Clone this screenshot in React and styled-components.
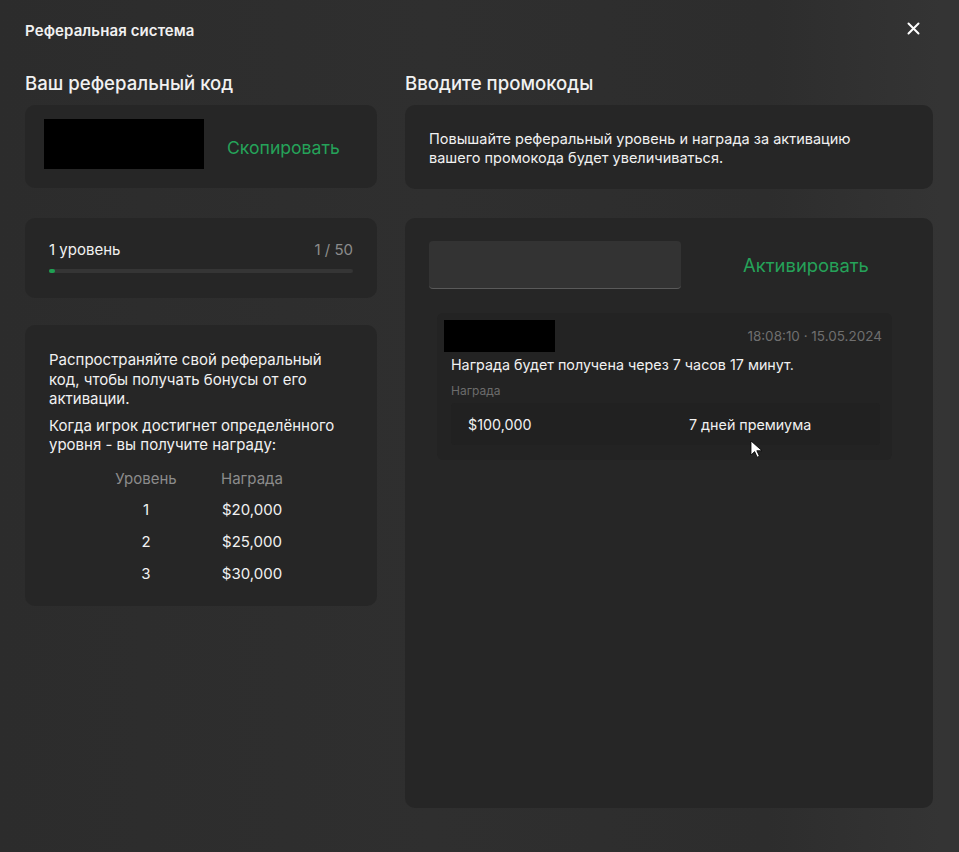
import React from 'react';
import styled, { createGlobalStyle } from 'styled-components';

const GlobalStyle = createGlobalStyle`
  html, body {
    margin: 0;
    padding: 0;
    background: #2e2e2e;
  }
  * {
    box-sizing: border-box;
  }
`;

const colors = {
  card: '#262626',
  text: '#f1f1f1',
  muted: '#8c8c8c',
  dim: '#6c6c6c',
  green: '#25a259',
};

const Modal = styled.div`
  width: 959px;
  height: 852px;
  padding: 0 26px 0 25px;
  font-family: Inter, "Noto Sans", sans-serif;
  color: ${colors.text};
  background: linear-gradient(90deg, #2c2c2c 0%, #2f2f2f 45%, #2d2d2d 80%, #343434 98%);
`;

const Header = styled.div`
  height: 60px;
  display: flex;
  align-items: center;
  justify-content: space-between;
`;

const ModalTitle = styled.h1`
  margin: 0;
  font-size: 15px;
  font-weight: 600;
  letter-spacing: 0.1px;
`;

const CloseButton = styled.button`
  width: 24px;
  height: 24px;
  margin-right: 8px;
  margin-top: -4px;
  padding: 0;
  border: none;
  background: none;
  color: #fff;
  display: flex;
  align-items: center;
  justify-content: center;
  cursor: pointer;
`;

const Columns = styled.div`
  display: grid;
  grid-template-columns: 352px 528px;
  column-gap: 28px;
  margin-top: 11px;
  align-items: start;
`;

const Column = styled.div`
  display: flex;
  flex-direction: column;
`;

const SectionTitle = styled.h2`
  margin: 0 0 10px;
  font-size: 18.6px;
  line-height: 24px;
  font-weight: 500;
`;

const Card = styled.div`
  background: ${colors.card};
  border-radius: 10px;
  padding: ${p => p.$pad || '24px'};
  margin-bottom: ${p => p.$gap || '0'};
  height: ${p => p.$height || 'auto'};
`;

const CodeRow = styled.div`
  display: flex;
  align-items: center;
  gap: 23px;
`;

const Redacted = styled.div`
  background: #000;
  width: ${p => p.$w}px;
  height: ${p => p.$h}px;
  margin-left: ${p => p.$shift || 0}px;
`;

const GreenAction = styled.button`
  background: none;
  border: none;
  padding: 0;
  font-family: inherit;
  font-size: ${p => p.$size || '17.6px'};
  color: ${colors.green};
  cursor: pointer;
`;

const CopyButton = styled(GreenAction)`
  margin-top: 6px;
`;

const LevelTop = styled.div`
  display: flex;
  justify-content: space-between;
  font-size: 15px;
  line-height: 20px;
  margin-bottom: 9px;
`;

const Muted = styled.span`
  color: ${colors.muted};
`;

const Track = styled.div`
  height: 4px;
  border-radius: 2px;
  background: #353535;
`;

const Fill = styled.div`
  height: 100%;
  border-radius: 2px;
  background: #1fa052;
`;

const Paragraph = styled.p`
  margin: 0 0 ${p => p.$gap || '0'};
  max-width: ${p => p.$max || 'none'};
  font-size: ${p => p.$size || '15px'};
  line-height: ${p => p.$line || '19.5px'};
`;

const RewardTable = styled.div`
  display: grid;
  grid-template-columns: 106px 106px;
  justify-content: center;
  margin-top: 14px;
  padding-right: 4px;
  font-size: 15px;
  row-gap: 12px;
  line-height: 20px;
  text-align: center;
`;

const HeadCell = styled.div`
  color: ${colors.muted};
  margin-bottom: -1px;
`;

const PromoRow = styled.div`
  display: flex;
  align-items: center;
  margin-bottom: 24px;
`;

const PromoInput = styled.input`
  width: 252px;
  height: 48px;
  border: none;
  border-bottom: 1px solid #5a5a5a;
  border-radius: 4px;
  background: #333;
  color: ${colors.text};
  font-family: inherit;
  font-size: 15px;
  padding: 0 14px;
  outline: none;
`;

const ActivateButton = styled(GreenAction)`
  flex: 1;
  margin-left: 22px;
  text-align: center;
`;

const Activation = styled.div`
  margin-left: 8px;
  margin-right: 17px;
  padding: 7px 10px 15px 14px;
  background: #232323;
  border-radius: 6px;
`;

const ActivationTop = styled.div`
  display: flex;
  justify-content: space-between;
  align-items: center;
  margin-bottom: 3px;
`;

const Stamp = styled.span`
  font-size: 13.5px;
  color: #6f6f6f;
`;

const Message = styled.div`
  font-size: 14.3px;
  line-height: 20px;
`;

const Label = styled.div`
  font-size: 12px;
  line-height: 16px;
  color: ${colors.dim};
  margin: 8px 0 4px;
`;

const RewardRow = styled.div`
  position: relative;
  display: grid;
  grid-template-columns: 221px 1fr;
  height: 42px;
  margin-right: 2px;
  align-items: center;
  background: #212121;
  border-radius: 4px;
  font-size: 14.3px;
`;

const RewardCell = styled.div`
  padding-left: 17px;
`;

const Pointer = styled.svg`
  position: absolute;
  left: 299px;
  top: 37px;
`;

const XIcon = () => (
  <svg width="13" height="13" viewBox="0 0 13 13">
    <path d="M1.5 1.5l10 10M11.5 1.5l-10 10" stroke="currentColor" strokeWidth="2" strokeLinecap="round" />
  </svg>
);

const levels = [
  { level: 1, reward: '$20,000' },
  { level: 2, reward: '$25,000' },
  { level: 3, reward: '$30,000' },
];

export default function App() {
  return (
    <>
      <GlobalStyle />
      <Modal>
        <Header>
          <ModalTitle>Реферальная система</ModalTitle>
          <CloseButton aria-label="Закрыть">
            <XIcon />
          </CloseButton>
        </Header>

        <Columns>
          <Column>
            <SectionTitle>Ваш реферальный код</SectionTitle>
            <Card $pad="14px 19px 19px" $gap="30px">
              <CodeRow>
                <Redacted $w={160} $h={50} />
                <CopyButton>Скопировать</CopyButton>
              </CodeRow>
            </Card>

            <Card $pad="22px 24px 25px" $gap="27px">
              <LevelTop>
                <span>1 уровень</span>
                <Muted>1 / 50</Muted>
              </LevelTop>
              <Track>
                <Fill style={{ width: `${Math.max((1 / 50) * 100, 2)}%` }} />
              </Track>
            </Card>

            <Card $pad="25px 24px 22px">
              <Paragraph $gap="7px">
                Распространяйте свой реферальный код, чтобы получать бонусы от его активации.
              </Paragraph>
              <Paragraph>
                Когда игрок достигнет определённого уровня - вы получите награду:
              </Paragraph>
              <RewardTable>
                <HeadCell>Уровень</HeadCell>
                <HeadCell>Награда</HeadCell>
                {levels.map(l => (
                  <React.Fragment key={l.level}>
                    <div>{l.level}</div>
                    <div>{l.reward}</div>
                  </React.Fragment>
                ))}
              </RewardTable>
            </Card>
          </Column>

          <Column>
            <SectionTitle>Вводите промокоды</SectionTitle>
            <Card $pad="24px 24px 22px" $gap="29px">
              <Paragraph $size="14.5px" $line="19px" $max="432px">
                Повышайте реферальный уровень и награда за активацию вашего промокода будет увеличиваться.
              </Paragraph>
            </Card>

            <Card $pad="23px 24px" $height="590px">
              <PromoRow>
                <PromoInput />
                <ActivateButton $size="18.4px">Активировать</ActivateButton>
              </PromoRow>

              <Activation>
                <ActivationTop>
                  <Redacted $w={111} $h={32} $shift={-7} />
                  <Stamp>18:08:10 · 15.05.2024</Stamp>
                </ActivationTop>
                <Message>Награда будет получена через 7 часов 17 минут.</Message>
                <Label>Награда</Label>
                <RewardRow>
                  <RewardCell>$100,000</RewardCell>
                  <RewardCell>7 дней премиума</RewardCell>
                  <Pointer width="12" height="18" viewBox="0 0 12 18">
                    <path d="M1 1v14l3.6-3.4 2.6 5.6 2.2-1-2.6-5.5H12z" fill="#fff" stroke="#000" strokeWidth="0.8" strokeLinejoin="round" />
                  </Pointer>
                </RewardRow>
              </Activation>
            </Card>
          </Column>
        </Columns>
      </Modal>
    </>
  );
}
